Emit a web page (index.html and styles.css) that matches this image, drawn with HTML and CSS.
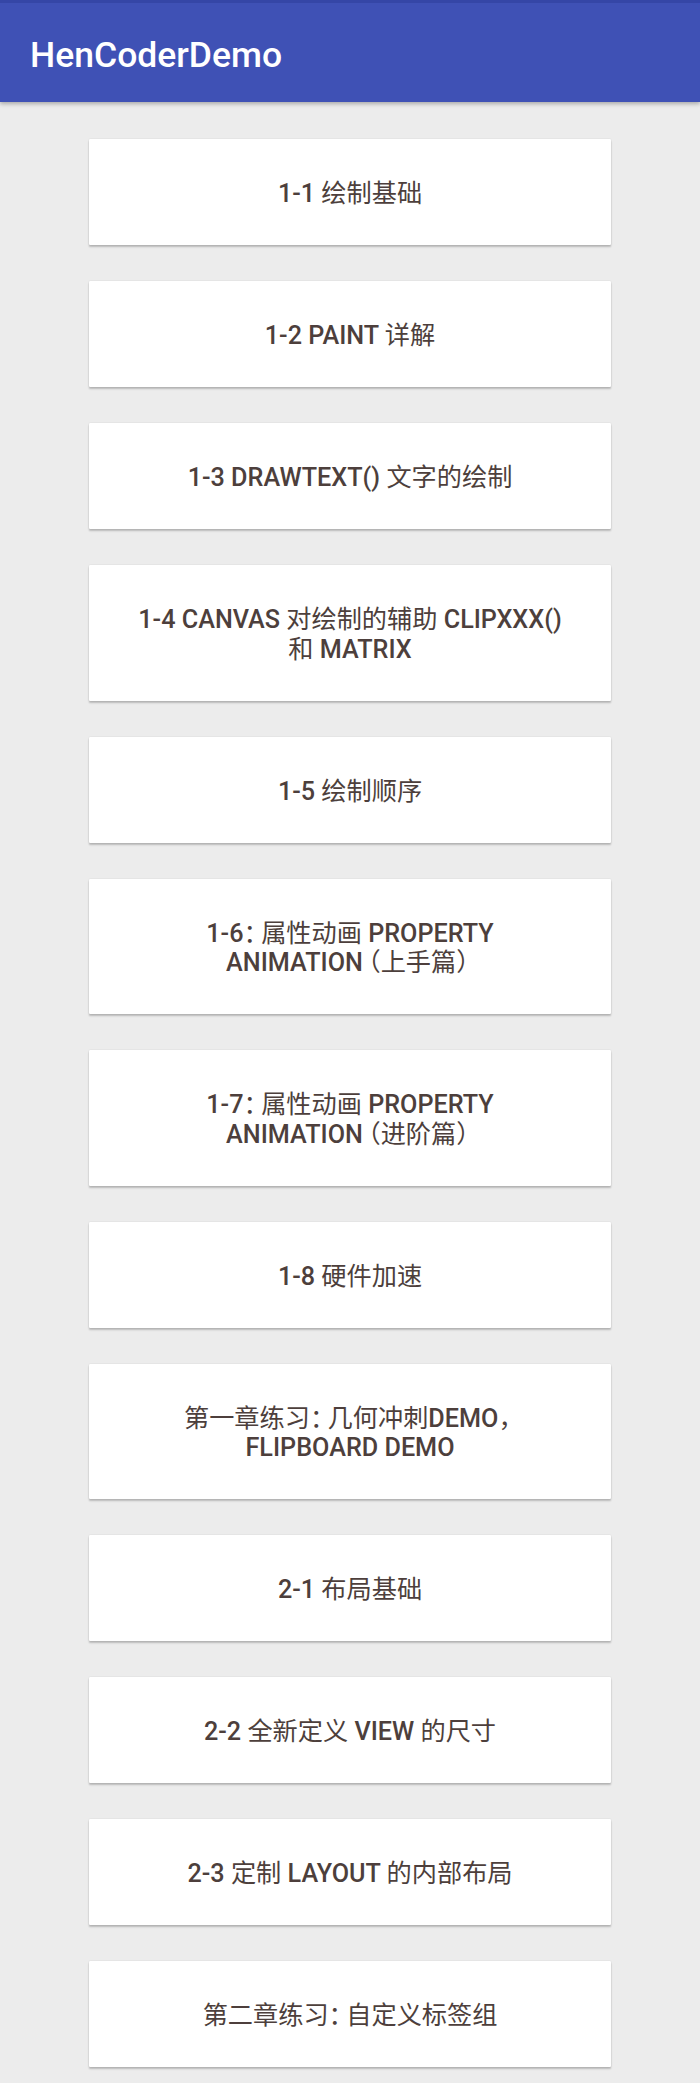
FILE: index.html
```html
<!DOCTYPE html>
<html lang="zh-CN">
<head>
<meta charset="utf-8">
<title>HenCoderDemo</title>
<link rel="stylesheet" href="styles.css">
</head>
<body>
<header class="appbar">
  <div class="statusbar"></div>
  <div class="toolbar"><h1 class="title">HenCoderDemo</h1></div>
</header>
<main class="list">
  <button class="card">1-1 <span class="zh">绘制基础</span></button>
  <button class="card">1-2 Paint <span class="zh">详解</span></button>
  <button class="card">1-3 drawText() <span class="zh">文字的绘制</span></button>
  <button class="card">1-4 Canvas <span class="zh">对绘制的辅助</span> clipXXX()<br><span class="zh">和</span> Matrix</button>
  <button class="card">1-5 <span class="zh">绘制顺序</span></button>
  <button class="card">1-6<span class="zh"><span class="pr">：</span>属性动画</span> Property<br>Animatio<span class="pr">n</span><span class="zh">（上手篇<span class="pr">）</span></span></button>
  <button class="card">1-7<span class="zh"><span class="pr">：</span>属性动画</span> Property<br>Animatio<span class="pr">n</span><span class="zh">（进阶篇<span class="pr">）</span></span></button>
  <button class="card">1-8 <span class="zh">硬件加速</span></button>
  <button class="card"><span class="zh">第一章练习<span class="pr">：</span>几何冲刺</span>Demo<span class="zh pr">，</span><br>Flipboard Demo</button>
  <button class="card">2-1 <span class="zh">布局基础</span></button>
  <button class="card">2-2 <span class="zh">全新定义</span> View <span class="zh">的尺寸</span></button>
  <button class="card">2-3 <span class="zh">定制</span> Layout <span class="zh">的内部布局</span></button>
  <button class="card"><span class="zh">第二章练习<span class="pr">：</span>自定义标签组</span></button>
</main>
</body>
</html>
```
FILE: styles.css
```css
html, body {
  margin: 0;
  padding: 0;
  background: #ececec;
  font-family: Roboto, "Noto Sans CJK SC", sans-serif;
}

.appbar {
  background: #3f51b5;
  box-shadow: 0 2px 4px rgba(0, 0, 0, 0.28);
  position: relative;
  z-index: 1;
}

.statusbar {
  height: 3px;
  background: #3546a6;
}

.toolbar {
  height: 99px;
  display: flex;
  align-items: center;
  padding: 4px 0 0 30px;
  box-sizing: border-box;
}

.title {
  margin: 0;
  color: #ffffff;
  font-family: Roboto, sans-serif;
  font-weight: 500;
  font-size: 35.5px;
  line-height: 40px;
}

.list {
  display: flex;
  flex-direction: column;
  align-items: center;
  gap: 36px;
  padding: 37px 0 16px;
}

.card {
  width: 522px;
  box-sizing: border-box;
  padding: 40.25px 20px 36.25px;
  border: none;
  border-radius: 1px;
  background: #ffffff;
  box-shadow: 0 2px 2px rgba(0, 0, 0, 0.22), 0 0 1.5px rgba(0, 0, 0, 0.14);
  font-family: Roboto, "Noto Sans CJK SC", sans-serif;
  font-weight: 500;
  font-size: 25.2px;
  line-height: 29.5px;
  color: #4d3f3c;
  text-transform: uppercase;
  text-align: center;
}

.zh {
  font-weight: 400;
}

/* full-width punctuation rendered narrower, as on the device */
.pr {
  letter-spacing: -7.5px;
}
```
